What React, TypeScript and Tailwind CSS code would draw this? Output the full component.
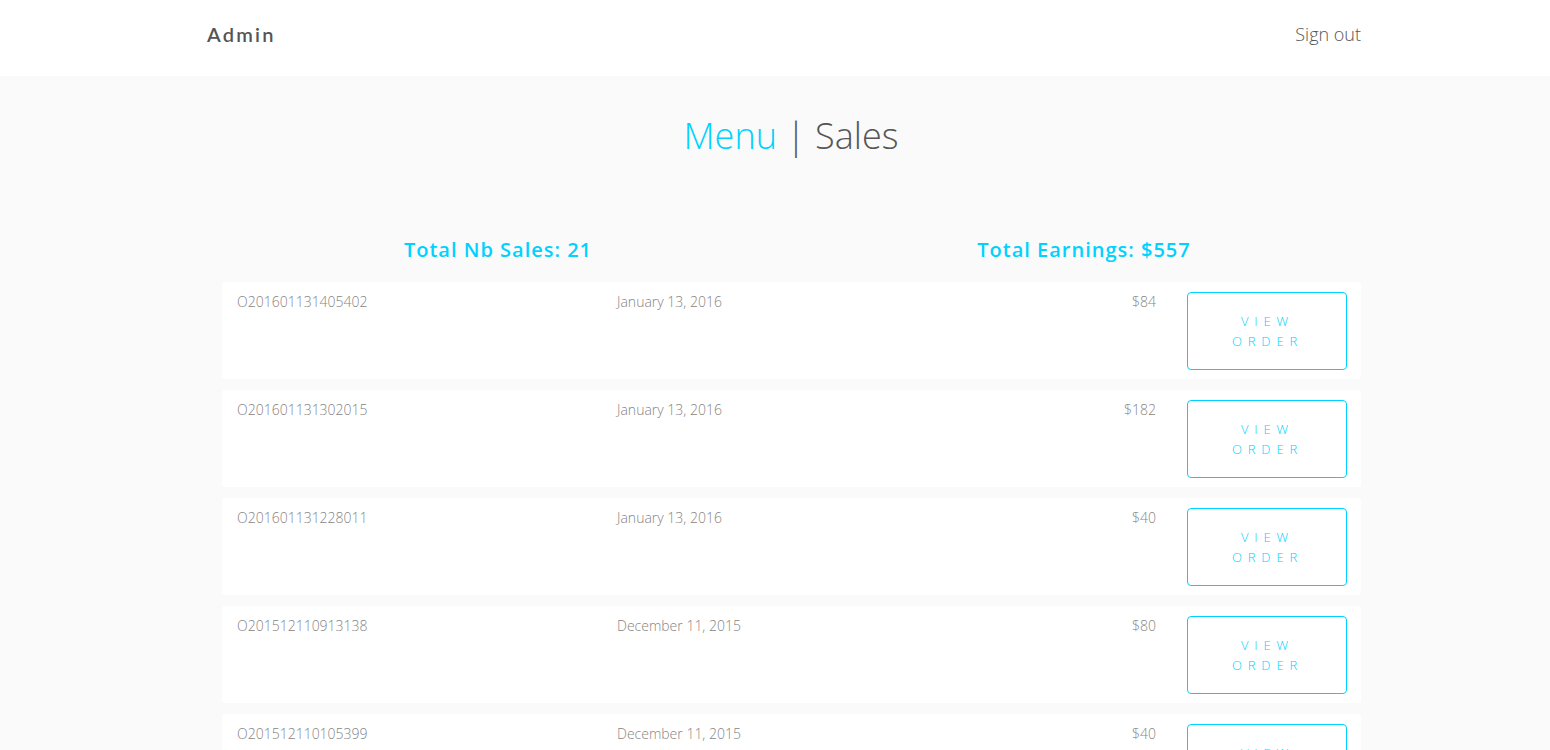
const sales = [
  { id: "O201601131405402", date: "January 13, 2016", total: "$84" },
  { id: "O201601131302015", date: "January 13, 2016", total: "$182" },
  { id: "O201601131228011", date: "January 13, 2016", total: "$40" },
  { id: "O201512110913138", date: "December 11, 2015", total: "$80" },
  { id: "O201512110105399", date: "December 11, 2015", total: "$40" },
  { id: "O201512101840217", date: "December 10, 2015", total: "$22" },
];

const SaleRow = ({ sale }: { sale: (typeof sales)[number] }) => (
  <div className="flex items-start bg-white rounded-[3px] h-[97px] pt-[11px] pl-[15px] pr-[14px] text-[14px] font-light text-[#858585]">
    <div className="w-[380px] leading-[18px]">{sale.id}</div>
    <div className="w-[300px] leading-[18px]">{sale.date}</div>
    <div className="w-[239px] text-right leading-[18px]">{sale.total}</div>
    <button className="ml-[31px] -mt-[1px] w-[160px] h-[78px] border border-[#00d2ff] rounded-[4px] text-[#00d2ff] text-[13px] font-light tracking-[0.45em] leading-[20px] pr-[40px] pl-[41px] uppercase">
      View Order
    </button>
  </div>
);

export default function App() {
  return (
    <div className="min-h-screen bg-[#fafafa] font-['Open_Sans',sans-serif]">
      <header className="bg-white h-[76px] flex items-center justify-between pl-[207px] pr-[189px]">
        <span className="font-['Lato',sans-serif] font-semibold text-[20px] tracking-[0.11em] text-[#555] -mt-[8px]">
          Admin
        </span>
        <a className="font-light text-[18px] text-[#555] -mt-[7px]">Sign out</a>
      </header>

      <h1 className="text-center font-light text-[36px] leading-[52px] pt-[34px] pl-[32px] text-[#555]">
        <span className="text-[#00d2ff]">Menu</span> | Sales
      </h1>

      <div className="ml-[205px] w-[1172px] grid grid-cols-2 mt-[75px] text-[20px] font-semibold tracking-[0.05em] text-[#00d2ff] leading-[26px]">
        <div className="text-center">Total Nb Sales: 21</div>
        <div className="text-center">Total Earnings: $557</div>
      </div>

      <div className="ml-[222px] w-[1139px] flex flex-col gap-[11px] mt-[19px] pb-8">
        {sales.map((s) => (
          <SaleRow key={s.id} sale={s} />
        ))}
      </div>
    </div>
  );
}
